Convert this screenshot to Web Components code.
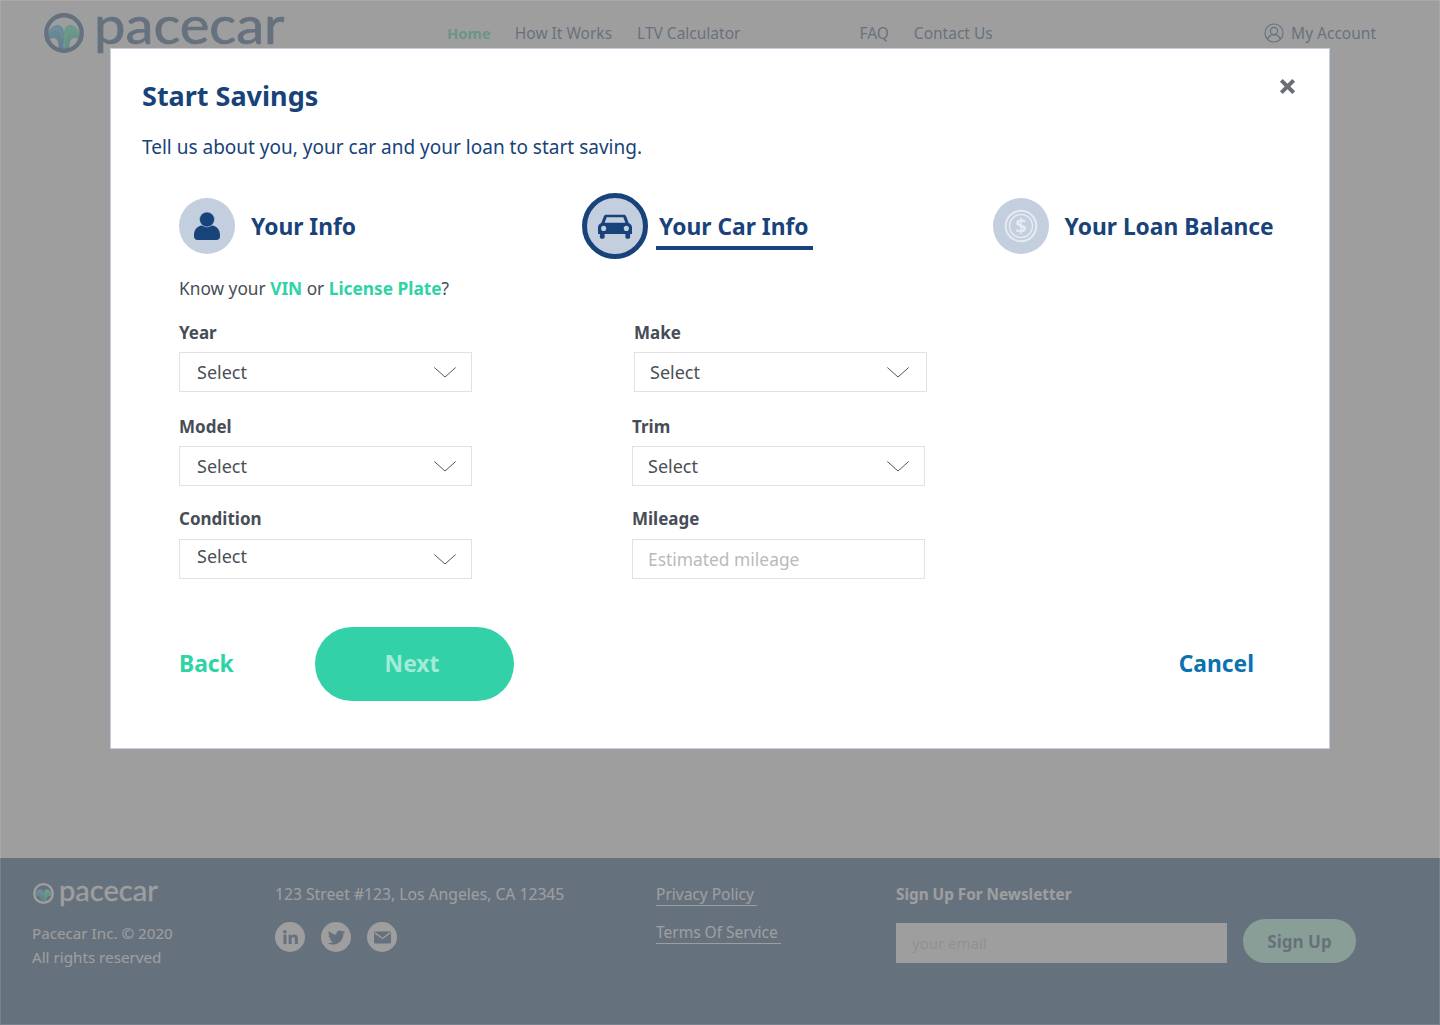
<!DOCTYPE html>
<html lang="en">
<head>
<meta charset="utf-8">
<title>Pacecar</title>
<style>
  html, body { margin: 0; height: 100%; }
  body { font-family: "Noto Sans", "Open Sans", sans-serif; color: #17437a; background: #fff; }
  .page { height: 1025px; display: flex; flex-direction: column; position: relative; overflow: hidden; }
  .grow { flex: 1; }
</style>
</head>
<body>
<div class="page">
  <site-header></site-header>
  <div class="grow"></div>
  <site-footer></site-footer>
  <start-savings-modal>
    <step-item slot="steps" icon="person">Your Info</step-item>
    <step-item slot="steps" icon="car" active style="margin-left:226px">Your Car Info</step-item>
    <step-item slot="steps" icon="dollar" style="margin-left:180px">Your Loan Balance</step-item>
    <select-field label="Year" value="Select"></select-field>
    <select-field label="Make" value="Select" style="margin-left:2px;--pl:15px;--pr:17px"></select-field>
    <select-field label="Model" value="Select"></select-field>
    <select-field label="Trim" value="Select" style="--pl:15px"></select-field>
    <select-field label="Condition" value="Select" style="margin-top:-2px;--lb:8px;--dy:-6px"></select-field>
    <select-field label="Mileage" placeholder="Estimated mileage" style="margin-top:-2px;--lb:8px;--pl:15px;--dy:0px"></select-field>
  </start-savings-modal>
</div>

<template id="tpl-logo">
  <style>
    :host { display: flex; align-items: center; color: var(--logo-color, #17437a); white-space: nowrap; }
    svg { display: block; flex: none; }
    .word { display: inline-block; font-family: "Lato", sans-serif; line-height: .88; transform-origin: left center; -webkit-text-stroke-color: currentColor; }
  </style>
  <svg viewBox="0 0 40 40">
    <defs>
      <linearGradient id="lb" x1="0" y1="0" x2="0" y2="1"><stop offset="0" stop-color="#30b8e8"/><stop offset="1" stop-color="#0a78c0"/></linearGradient>
      <linearGradient id="lg" x1="0" y1="0" x2="0" y2="1"><stop offset="0" stop-color="#30f0b0"/><stop offset="1" stop-color="#10b890"/></linearGradient>
    </defs>
    <path d="M3 24C5 15 11 11 15 12C18 12.500 20 16 20 21L19.500 37L14.500 37C15 31 14 26 10.500 25C8 24.500 5.500 25.500 3.500 28Z" fill="url(#lb)"/>
    <path d="M37 24C35 15 29 11 25 12C22 12.500 20 16 20 21L20.500 37L25.500 37C25 31 26 26 29.500 25C32 24.500 34.500 25.500 36.500 28Z" fill="url(#lg)"/>
    <path d="M5 21C8 16 12 15 15 16.500C17 18 18 21 18 25M35 21C32 16 28 15 25 16.500C23 18 22 21 22 25" fill="none" stroke="#fff" stroke-opacity=".3" stroke-width="1"/>
    <circle cx="20" cy="20" r="17.700" fill="none" stroke="currentColor" stroke-width="4.400"/>
  </svg>
</template>

<script>
const ICONS = {
  person: '<svg width="28" height="30" viewBox="0 0 28 30"><path d="M1 24c0-5 3-9 8-9.500 3 1.500 7 1.500 10 0 5 .5 8 4.500 8 9.500v1.500c0 2-1.500 3.500-3.500 3.500h-19C2.500 29 1 27.500 1 25.500z" fill="#17437a"/><circle cx="14" cy="8.500" r="7.500" fill="#17437a" stroke="#c3cede" stroke-width=".6"/></svg>',
  car: '<svg width="34" height="27" viewBox="0 0 36 28"><path fill="#17437a" d="M8.500 1.500h19c1 0 1.800.6 2.200 1.500l2.800 7.200C34.500 11 36 12.800 36 15v7h-2v3.500c0 1-.8 1.500-1.500 1.500h-2c-.8 0-1.500-.6-1.500-1.500V22H7v3.500c0 1-.7 1.500-1.500 1.500h-2C2.800 27 2 26.500 2 25.500V22H0v-7c0-2.200 1.500-4 3.500-4.800L6.300 3c.4-.9 1.200-1.500 2.200-1.500zM9.200 4.300 7 10h22l-2.200-5.700z"/><circle cx="6" cy="16" r="2.700" fill="#c3cede"/><circle cx="30" cy="16" r="2.700" fill="#c3cede"/></svg>',
  dollar: '<svg width="34" height="34" viewBox="0 0 34 34" fill="none"><circle cx="17" cy="17" r="15.300" stroke="#e6ebf1" stroke-width="2"/><circle cx="17" cy="17" r="11.500" stroke="#e6ebf1" stroke-width="1.500"/><text x="17" y="24" text-anchor="middle" font-family="Noto Sans, sans-serif" font-size="20" font-weight="700" fill="#e6ebf1">$</text></svg>'
};

class PacecarLogo extends HTMLElement {
  connectedCallback() {
    const root = this.attachShadow({ mode: 'open' });
    root.appendChild(document.getElementById('tpl-logo').content.cloneNode(true));
    const size = this.getAttribute('size');
    const svg = root.querySelector('svg');
    svg.setAttribute('width', size);
    svg.setAttribute('height', size);
    const word = document.createElement('span');
    word.className = 'word';
    word.textContent = 'pacecar';
    word.style.fontSize = this.getAttribute('font') + 'px';
    word.style.marginLeft = this.getAttribute('gap') + 'px';
    word.style.transform = `translateY(${this.getAttribute('dy')}px) scaleX(${this.getAttribute('sx')})`;
    word.style.webkitTextStrokeWidth = this.getAttribute('stroke') + 'px';
    root.appendChild(word);
  }
}

class SiteHeader extends HTMLElement {
  constructor() {
    super();
    this.attachShadow({ mode: 'open' }).innerHTML = `
      <style>
        :host { display: flex; height: 66px; padding: 12px 64px 0 44px; box-sizing: border-box; align-items: flex-start; font-size: 15.500px; }
        pacecar-logo { --logo-color: #17437a; width: 244px; height: 42px; flex: none; }
        nav { display: flex; align-items: baseline; margin-left: 159px; padding-top: 10px; color: #17437a; }
        nav a.home { color: #2ed3a6; font-weight: 700; font-size: 14.800px; margin-right: 24px; }
        nav a { margin-right: 25px; }
        nav a.faq { margin-left: 94px; }
        .acct { margin-left: auto; display: flex; align-items: center; gap: 7px; padding-top: 10px; color: #17437a; }
      </style>
      <pacecar-logo size="40" font="52" gap="10" sx="1.080" dy="-8" stroke="0.7"></pacecar-logo>
      <nav>
        <a class="home">Home</a><a>How It Works</a><a>LTV Calculator</a><a class="faq">FAQ</a><a>Contact Us</a>
      </nav>
      <div class="acct">
        <svg width="20" height="20" viewBox="0 0 20 20" fill="none" stroke="#17437a" stroke-width="1.200"><circle cx="10" cy="10" r="9"/><circle cx="10" cy="8" r="3.600"/><path d="M3.800 16c1-3 3.500-4.300 6.200-4.300s5.200 1.300 6.200 4.300"/></svg>
        My Account
      </div>`;
  }
}

class SiteFooter extends HTMLElement {
  constructor() {
    super();
    this.attachShadow({ mode: 'open' }).innerHTML = `
      <style>
        :host { display: flex; height: 167px; box-sizing: border-box; background: #17437a; color: #fff; padding: 22px 0 0 32px; font-size: 15.700px; }
        .brand { width: 243px; font-size: 15.200px; }
        pacecar-logo { --logo-color: #fff; height: 26px; padding-left: 1px; }
        .brand p { margin: 15px 0 0; line-height: 24px; }
        .addr { width: 381px; padding-top: 3px; }
        .social { display: flex; gap: 16px; margin-top: 17px; }
        .social span { width: 30px; height: 30px; border-radius: 50%; background: #fff; display: grid; place-items: center; }
        .links { width: 240px; padding-top: 4px; display: flex; flex-direction: column; align-items: flex-start; gap: 16px; font-size: 15.500px; }
        .links a { border-bottom: 1px solid #fff; padding-right: 3px; line-height: 21px; }
        .news b { display: block; margin-top: 4px; font-size: 15.300px; }
        .form { display: flex; margin-top: 15px; align-items: flex-end; }
        .input { width: 331px; height: 40px; box-sizing: border-box; background: #fff; color: #c6c6c6; padding: 9px 16px; line-height: 23px; font-size: 15px; }
        .btn { margin-left: 16px; width: 113px; height: 44px; border-radius: 22px; background: #a6ffdc; color: #17437a; font-weight: 700; font-size: 17px; display: grid; place-items: center; }
      </style>
      <div class="brand">
        <pacecar-logo size="21" font="28" gap="5" sx="1.040" dy="-3.500" stroke="0.3"></pacecar-logo>
        <p>Pacecar Inc. © 2020<br>All rights reserved</p>
      </div>
      <div class="addr">
        123 Street #123, Los Angeles, CA 12345
        <div class="social">
          <span><svg width="17" height="17" viewBox="0 0 18 18" fill="#17437a"><rect x="1.500" y="6" width="3.200" height="10"/><circle cx="3.100" cy="3" r="1.900"/><path d="M7 6h3v1.400c.6-1 1.800-1.700 3.200-1.700 2.700 0 3.600 1.800 3.600 4.400V16h-3.200v-5.200c0-1.300-.4-2.300-1.600-2.300s-1.800 1-1.800 2.300V16H7z"/></svg></span>
          <span><svg width="19" height="19" viewBox="0 0 24 24" fill="#17437a"><path d="M23 5.100c-.8.400-1.700.6-2.600.7.900-.6 1.600-1.400 2-2.500-.9.500-1.900.9-2.900 1.100C18.700 3.500 17.500 3 16.200 3c-2.500 0-4.500 2-4.500 4.500 0 .4 0 .7.100 1C8 8.300 4.700 6.500 2.500 3.800c-.4.700-.6 1.500-.6 2.300 0 1.600.8 2.900 2 3.700-.7 0-1.400-.2-2-.6v.1c0 2.200 1.600 4 3.600 4.400-.4.100-.8.200-1.200.2-.3 0-.6 0-.8-.1.600 1.800 2.200 3.100 4.200 3.100-1.500 1.200-3.500 1.900-5.600 1.900H1c2 1.300 4.400 2 6.900 2 8.300 0 12.800-6.900 12.800-12.800v-.6c.9-.6 1.700-1.400 2.300-2.300z"/></svg></span>
          <span><svg width="19" height="15" viewBox="0 0 20 16" fill="none" stroke-width="1.500"><rect x="1" y="1.500" width="18" height="13" rx="1.500" fill="#17437a"/><path d="M2 3l8 6 8-6" stroke="#fff"/></svg></span>
        </div>
      </div>
      <div class="links"><a>Privacy Policy</a><a>Terms Of Service</a></div>
      <div class="news">
        <b>Sign Up For Newsletter</b>
        <div class="form"><div class="input">your email</div><div class="btn">Sign Up</div></div>
      </div>`;
  }
}

class StepItem extends HTMLElement {
  constructor() {
    super();
    this.attachShadow({ mode: 'open' }).innerHTML = `
      <style>
        :host { display: flex; align-items: center; gap: 16px; font-size: 22.800px; font-weight: 700; color: #17437a; height: 66px; white-space: nowrap; }
        .ic { width: 56px; height: 56px; border-radius: 50%; background: #c3cede; display: grid; place-items: center; box-sizing: border-box; flex: none; }
        :host([active]) { gap: 8px; }
        :host([active]) .ic { width: 66px; height: 66px; border: 5px solid #17437a; }
        .lbl { display: inline-block; }
        :host([active]) .lbl { border-bottom: 4px solid #17437a; padding: 0 4px 0 3px; line-height: 38px; margin-top: 6px; }
      </style>
      <span class="ic">${ICONS[this.getAttribute('icon')] || ''}</span>
      <span class="lbl"><slot></slot></span>`;
  }
}

class SelectField extends HTMLElement {
  constructor() {
    super();
    const ph = this.getAttribute('placeholder');
    this.attachShadow({ mode: 'open' }).innerHTML = `
      <style>
        :host { display: block; width: 293px; color: #4b4f55; }
        label { display: block; font-size: 17px; font-weight: 700; line-height: 24px; color: #474d57; margin-bottom: var(--lb, 7px); }
        .box { height: 40px; box-sizing: border-box; border: 1px solid #dfe2e6; display: flex; align-items: center; justify-content: space-between; padding: 0 var(--pr, 15px) 0 var(--pl, 17px); font-size: 18px; background: #fff; }
        .box span { margin-top: var(--dy, 0px); }
        .ph { color: #b8babd; font-size: 17.400px; }
      </style>
      <label>${this.getAttribute('label')}</label>
      <div class="box">
        ${ph ? `<span class="ph">${ph}</span>` : `<span>${this.getAttribute('value')}</span>
        <svg width="22" height="11" viewBox="0 0 22 11" fill="none" stroke="#555" stroke-width="1"><path d="M.3.500 11 10 21.700.500"/></svg>`}
      </div>`;
  }
}

class StartSavingsModal extends HTMLElement {
  constructor() {
    super();
    this.attachShadow({ mode: 'open' }).innerHTML = `
      <style>
        :host { position: absolute; inset: 0; background: rgba(127,127,127,.76); display: block; box-shadow: inset 0 0 0 1px rgba(255,255,255,.12); }
        .card { position: absolute; left: 110px; top: 48px; width: 1220px; height: 701px; box-sizing: border-box; background: #fff; border: 1px solid #c3cede; padding: 27px 32px 0 31px; color: #17437a; }
        h1 { margin: 0; font-size: 27px; line-height: 40px; font-weight: 700; }
        .sub { margin: 16px 0 0; font-size: 19px; line-height: 30px; }
        .close { position: absolute; right: 32px; top: 28px; }
        .steps { display: flex; align-items: center; margin: 31px 0 0 37px; }
        .know { margin: 14px 0 0 37px; font-size: 17.300px; line-height: 32px; color: #474d57; }
        .know b { color: #2ed3a6; }
        .grid { display: grid; grid-template-columns: 293px 293px; column-gap: 160px; row-gap: 23px; margin: 16px 0 0 37px; }
        .actions { display: flex; align-items: center; margin: 48px 43px 0 37px; font-size: 22.800px; font-weight: 700; }
        .back { color: #2ed3a6; width: 136px; margin-top: -2px; }
        .next { width: 199px; height: 74px; box-sizing: border-box; padding: 0 5px 2px 0; border-radius: 37px; background: #33d1a7; color: #a3ebd8; display: grid; place-items: center; }
        .cancel { margin-left: auto; color: #0a72b0; margin-top: -2px; }
      </style>
      <div class="card">
        <h1>Start Savings</h1>
        <svg class="close" width="19" height="19" viewBox="0 0 20 20"><path d="M2 5l3-3 5 5 5-5 3 3-5 5 5 5-3 3-5-5-5 5-3-3 5-5z" fill="#6a6e75"/></svg>
        <p class="sub">Tell us about you, your car and your loan to start saving.</p>
        <div class="steps"><slot name="steps"></slot></div>
        <p class="know">Know your <b>VIN</b> or <b>License Plate</b>?</p>
        <div class="grid"><slot></slot></div>
        <div class="actions"><span class="back">Back</span><span class="next">Next</span><span class="cancel">Cancel</span></div>
      </div>`;
  }
}

customElements.define('pacecar-logo', PacecarLogo);
customElements.define('site-header', SiteHeader);
customElements.define('site-footer', SiteFooter);
customElements.define('step-item', StepItem);
customElements.define('select-field', SelectField);
customElements.define('start-savings-modal', StartSavingsModal);
</script>
</body>
</html>
